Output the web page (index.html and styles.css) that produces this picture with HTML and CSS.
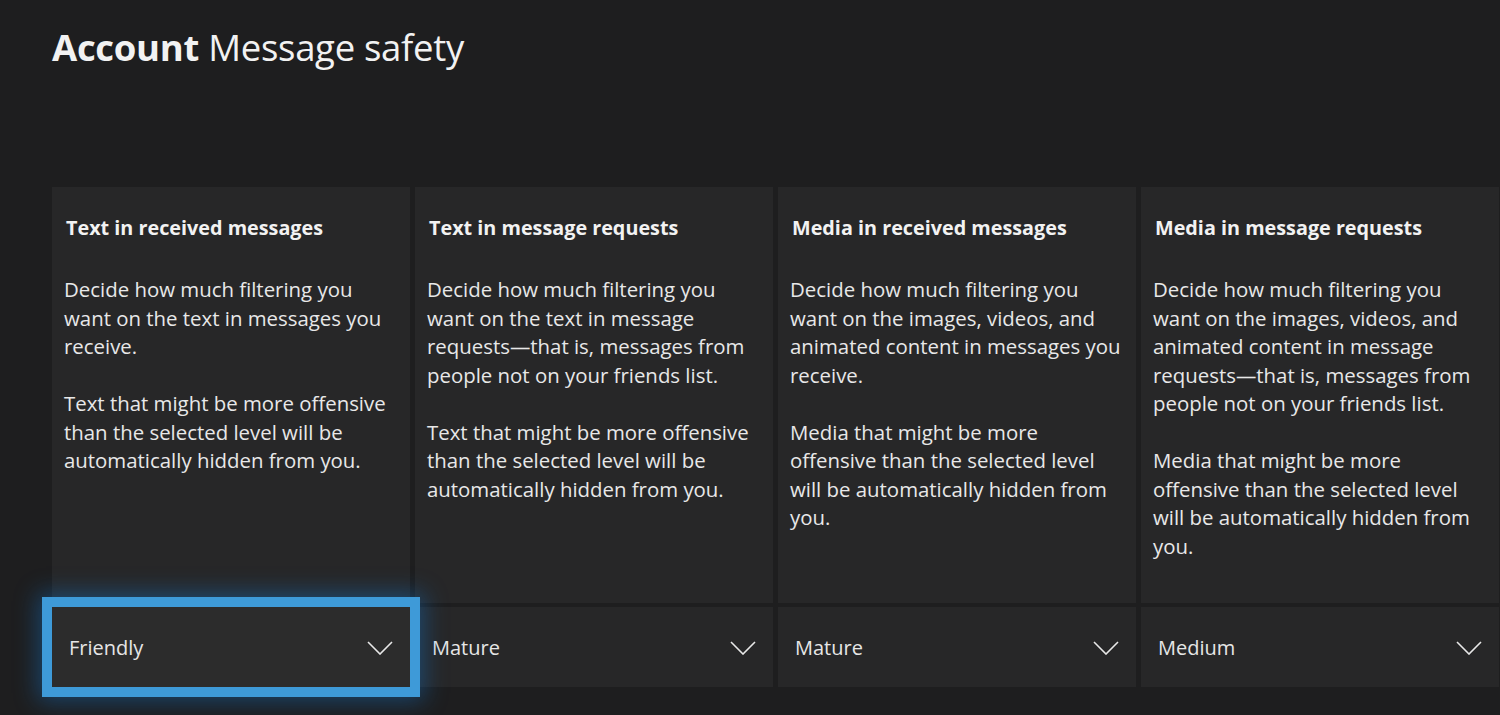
FILE: index.html
```html
<!DOCTYPE html>
<html lang="en">
<head>
  <meta charset="UTF-8">
  <title>Account Message safety</title>
  <link rel="stylesheet" href="styles.css">
</head>
<body>
<div class="page">
  <h1 class="title"><b>Account</b> Message safety</h1>

  <div class="columns">
    <!--接收消息中的文字-->
    <div class="col">
      <div class="card">
        <h2>Text in received messages</h2>
        <p>Decide how much filtering you want on the text in messages you receive.</p>
        <p>Text that might be more offensive than the selected level will be automatically hidden from you.</p>
      </div>
      <div class="select focus">
        <span>Friendly</span>
        <svg class="chev" width="26" height="14" viewBox="0 0 26 14"><path d="M1 1 L13 13 L25 1" fill="none" stroke="#e8e8e8" stroke-width="1.6"/></svg>
      </div>
    </div>

    <div class="col">
      <div class="card">
        <h2>Text in message requests</h2>
        <p>Decide how much filtering you want on the text in message requests—that is, messages from people not on your friends list.</p>
        <p>Text that might be more offensive than the selected level will be automatically hidden from you.</p>
      </div>
      <div class="select">
        <span>Mature</span>
        <svg class="chev" width="26" height="14" viewBox="0 0 26 14"><path d="M1 1 L13 13 L25 1" fill="none" stroke="#e8e8e8" stroke-width="1.6"/></svg>
      </div>
    </div>

    <div class="col">
      <div class="card">
        <h2>Media in received messages</h2>
        <p>Decide how much filtering you want on the images, videos, and animated content in messages you receive.</p>
        <p>Media that might be more offensive than the selected level will be automatically hidden from you.</p>
      </div>
      <div class="select">
        <span>Mature</span>
        <svg class="chev" width="26" height="14" viewBox="0 0 26 14"><path d="M1 1 L13 13 L25 1" fill="none" stroke="#e8e8e8" stroke-width="1.6"/></svg>
      </div>
    </div>

    <div class="col">
      <div class="card">
        <h2>Media in message requests</h2>
        <p>Decide how much filtering you want on the images, videos, and animated content in message requests—that is, messages from people not on your friends list.</p>
        <p>Media that might be more offensive than the selected level will be automatically hidden from you.</p>
      </div>
      <div class="select">
        <span>Medium</span>
        <svg class="chev" width="26" height="14" viewBox="0 0 26 14"><path d="M1 1 L13 13 L25 1" fill="none" stroke="#e8e8e8" stroke-width="1.6"/></svg>
      </div>
    </div>
  </div>
</div>
</body>
</html>
```

FILE: styles.css
```css
* {
  margin: 0;
  padding: 0;
  box-sizing: border-box;
}
html, body {
  height: 100%;
}
body {
  background-color: #1e1e1f;
  color: #f2f2f2;
  font-family: "Open Sans", "Noto Sans", sans-serif;
  overflow: hidden;
}
.page {
  padding: 22px 0 0 52px;
}
.title {
  font-size: 36.5px;
  font-weight: 400;
  line-height: 50px;
  letter-spacing: -0.3px;
}
.title b {
  font-weight: 700;
}
.columns {
  display: grid;
  grid-template-columns: repeat(4, 358px);
  column-gap: 5px;
  margin-top: 115px;
}
.col {
  display: flex;
  flex-direction: column;
  gap: 4px;
}
.card {
  height: 416px;
  background-color: #272728;
  padding: 28px 12px 0 12px;
}
.card h2 {
  font-size: 19.8px;
  font-weight: 700;
  line-height: 26px;
  margin-bottom: 34px;
  padding-left: 2px;
}
.card p {
  font-size: 20.4px;
  line-height: 28.5px;
  color: #e8e8e8;
  margin-bottom: 28.5px;
}
.select {
  height: 80px;
  background-color: #272728;
  display: flex;
  align-items: center;
  justify-content: space-between;
  padding: 1px 17px 0 17px;
  font-size: 20px;
  color: #e6e6e6;
}
.select.focus {
  background-color: #2c2c2c;
  outline: 10px solid #3e9ad8;
  box-shadow: 0 0 22px 14px rgba(20, 115, 200, 0.45);
  position: relative;
}
.chev {
  display: block;
}
```
